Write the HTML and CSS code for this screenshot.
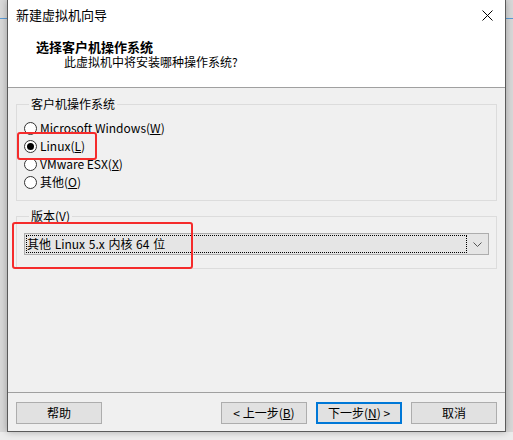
FILE: index.html
```html
<!DOCTYPE html>
<html lang="zh-CN">
<head>
<meta charset="utf-8">
<title>新建虚拟机向导</title>
<link rel="stylesheet" href="styles.css">
</head>
<body>
<div class="stage">
  <div class="window">
    <div class="titlebar">
      <span class="title">新建虚拟机向导</span>
      <svg class="close" width="11" height="11" viewBox="0 0 11 11"><path d="M0.5 0.5 L10.5 10.5 M10.5 0.5 L0.5 10.5" stroke="#000" stroke-width="1" fill="none"/></svg>
    </div>
    <div class="header">
      <div class="heading">选择客户机操作系统</div>
      <div class="sub">此虚拟机中将安装哪种操作系统?</div>
    </div>
    <div class="content">
      <fieldset class="group group-os">
        <legend>客户机操作系统</legend>
        <div class="radio"><span class="circle"></span><span>Microsoft Windows(<u>W</u>)</span></div>
        <div class="radio"><span class="circle checked"></span><span>Linux(<u>L</u>)</span></div>
        <div class="radio"><span class="circle"></span><span>VMware ESX(<u>X</u>)</span></div>
        <div class="radio"><span class="circle"></span><span>其他(<u>O</u>)</span></div>
      </fieldset>
      <fieldset class="group group-ver">
        <legend>版本(V)</legend>
        <div class="select">
          <span class="focus">其他 Linux 5.x 内核 64 位</span>
          <span class="arrow"><svg width="9" height="5" viewBox="0 0 9 5"><path d="M0.5 0.5 L4.5 4.5 L8.5 0.5" stroke="#555" stroke-width="1" fill="none"/></svg></span>
        </div>
      </fieldset>
    </div>
    <div class="footer">
      <button class="btn">帮助</button>
      <span class="spacer"></span>
      <button class="btn">&lt; 上一步(<u>B</u>)</button>
      <button class="btn btn-default">下一步(<u>N</u>) &gt;</button>
      <button class="btn">取消</button>
    </div>
    <div class="mark mark-linux"></div>
    <div class="mark mark-ver"></div>
  </div>
</div>
</body>
</html>
```
FILE: styles.css
```css
* { box-sizing: border-box; }
html, body {
  margin: 0;
  padding: 0;
}
body {
  width: 513px;
  height: 440px;
  overflow: hidden;
  font-family: "Noto Sans CJK SC", "Liberation Sans", sans-serif;
  font-size: 12px;
  color: #000;
  background: linear-gradient(to bottom, #d8d8d8 0, #d8d8d8 18px, #5b9bd5 18px, #5b9bd5 19px, #d8d8d8 19px, #d8d8d8 432px, #ececec 432px);
}
.stage {
  padding-left: 7px;
}
.window {
  position: relative;
  width: 499px;
  height: 432px;
  border: 1px solid #5a5a5a;
  border-top: none;
  background: #f0f0f0;
  box-shadow: 0 0 7px rgba(0, 0, 0, 0.28);
  display: flex;
  flex-direction: column;
}
.titlebar {
  height: 30px;
  background: #fff;
  display: flex;
  align-items: center;
  justify-content: space-between;
  padding: 0 12px 0 8px;
}
.title {
  font-size: 13px;
  line-height: 16px;
}
.close {
  display: block;
  margin-top: 1px;
}
.header {
  height: 58px;
  background: #fff;
  border-bottom: 1px solid #a0a0a0;
  padding: 10px 0 0 28px;
}
.heading {
  font-size: 13px;
  font-weight: 700;
  line-height: 14px;
}
.sub {
  line-height: 16px;
  padding-left: 28px;
}
.content {
  height: 305px;
  border-bottom: 1px solid #a0a0a0;
  padding: 8px 8px 0 8px;
}
.group {
  margin: 0;
  border: 1px solid #dcdcdc;
  padding: 0 7px;
  min-width: 0;
}
.group legend {
  margin-left: 5px;
  padding: 0 2px;
  line-height: 16px;
}
.group-os {
  padding-top: 7px;
  padding-bottom: 9px;
}
.group-ver {
  margin-top: 7px;
  padding-top: 9px;
  padding-bottom: 13px;
}
.radio {
  height: 18px;
  display: flex;
  align-items: center;
  gap: 3px;
  line-height: 16px;
}
.circle {
  width: 13px;
  height: 13px;
  border: 1px solid #333;
  border-radius: 50%;
  background: #fff;
  display: flex;
  align-items: center;
  justify-content: center;
  flex: none;
}
.circle.checked::after {
  content: "";
  width: 7px;
  height: 7px;
  border-radius: 50%;
  background: #000;
}
.select {
  height: 22px;
  border: 1px solid #adadad;
  background: #e5e5e5;
  display: flex;
  align-items: stretch;
  padding: 1px;
}
.focus {
  flex: 1;
  border: 1px dotted #000;
  line-height: 16px;
  padding-left: 0;
  white-space: pre;
  word-spacing: 1px;
}
.arrow {
  width: 20px;
  display: flex;
  align-items: center;
  justify-content: center;
  padding-top: 1px;
}
.arrow svg { display: block; }
.footer {
  flex: 1;
  display: flex;
  align-items: flex-start;
  padding: 9px 8px 0 8px;
  gap: 9px;
}
.spacer { flex: 1; }
.btn {
  width: 86px;
  height: 22px;
  margin: 0;
  padding: 0;
  border: 1px solid #adadad;
  background: #e1e1e1;
  font-family: inherit;
  font-size: 12px;
  line-height: 18px;
  color: #000;
}
.btn-default {
  border: 2px solid #0078d7;
}
.mark {
  position: absolute;
  border: 2px solid #f52b2b;
  border-radius: 3px;
  pointer-events: none;
}
.mark-linux {
  left: 9px;
  top: 132px;
  width: 80px;
  height: 28px;
}
.mark-ver {
  left: 4px;
  top: 222px;
  width: 181px;
  height: 47px;
}
```
